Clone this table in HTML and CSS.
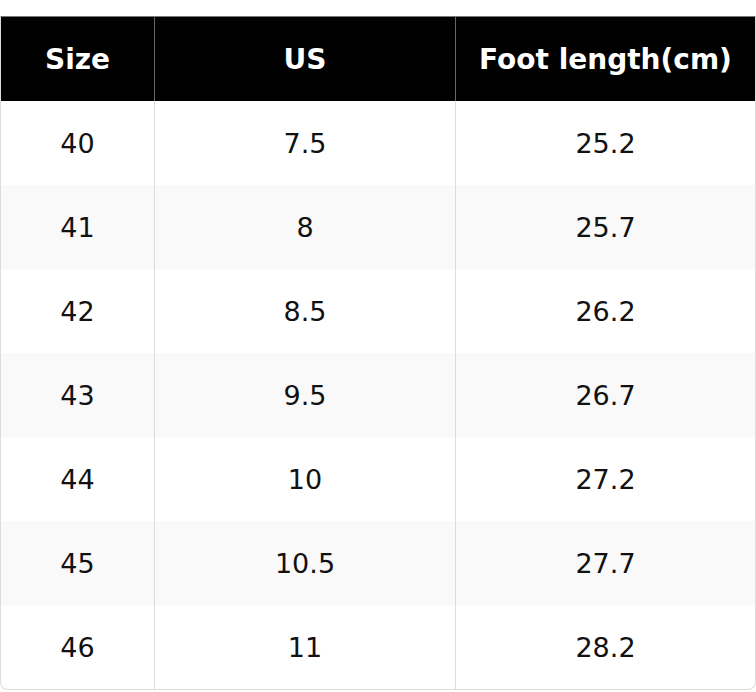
FILE: index.html
```html
<!DOCTYPE html>
<html>
<head>
<meta charset="utf-8">
<link rel="stylesheet" href="styles.css">
</head>
<body>
<div class="wrap">
<table class="size-table">
<colgroup><col class="c1"><col class="c2"><col class="c3"></colgroup>
<thead>
<tr><th>Size</th><th>US</th><th>Foot length(cm)</th></tr>
</thead>
<tbody>
<tr><td>40</td><td>7.5</td><td>25.2</td></tr>
<tr><td>41</td><td>8</td><td>25.7</td></tr>
<tr><td>42</td><td>8.5</td><td>26.2</td></tr>
<tr><td>43</td><td>9.5</td><td>26.7</td></tr>
<tr><td>44</td><td>10</td><td>27.2</td></tr>
<tr><td>45</td><td>10.5</td><td>27.7</td></tr>
<tr><td>46</td><td>11</td><td>28.2</td></tr>
</tbody>
</table>
</div>
</body>
</html>
```
FILE: styles.css
```css
html, body {
  margin: 0;
  padding: 0;
  background: #fff;
}
.wrap {
  margin-top: 16px;
  width: 756px;
  box-sizing: border-box;
  border: 1px solid #dcdcdc;
  border-top-color: #777;
  border-radius: 0 0 8px 8px;
  overflow: hidden;
}
.size-table {
  width: 100%;
  table-layout: fixed;
  border-collapse: separate;
  border-spacing: 0;
  font-family: "DejaVu Sans", sans-serif;
  font-size: 27px;
  color: #111;
}
.c1 { width: 154px; }
.c2 { width: 301px; }
.c3 { width: auto; }
.size-table th,
.size-table td {
  height: 84px;
  padding: 0;
  text-align: center;
  vertical-align: middle;
  box-sizing: border-box;
}
.size-table th {
  background: #000;
  color: #fff;
  font-size: 28px;
  font-weight: bold;
  border-right: 1px solid #666;
}
.size-table td {
  border-right: 1px solid #dcdcdc;
}
.size-table th:last-child,
.size-table td:last-child {
  border-right: none;
}
.size-table tbody tr:nth-child(even) td {
  background: #f9f9f9;
}
```
